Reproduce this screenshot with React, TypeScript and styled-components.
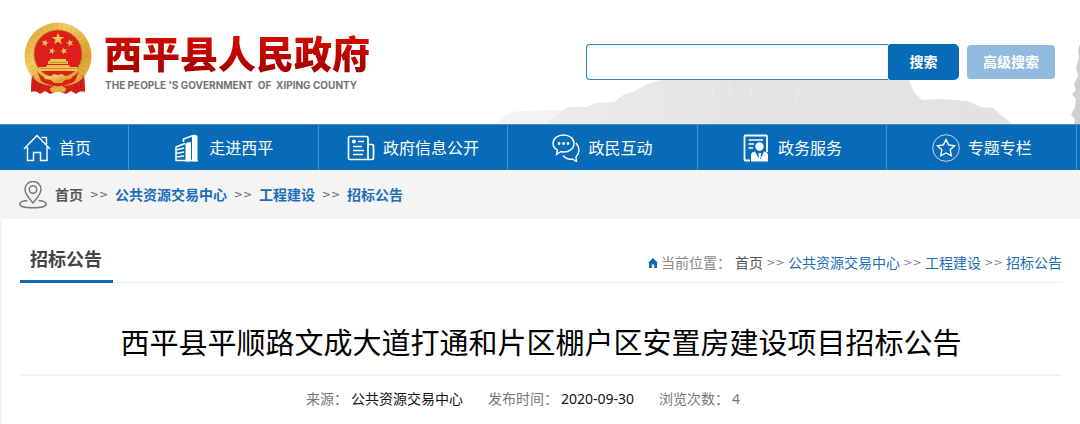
import React, { Fragment } from "react";
import styled, { createGlobalStyle } from "styled-components";

const blue = "#086bb8";
const lineGrey = "#ececec";

const GlobalStyle = createGlobalStyle`
  *, *::before, *::after { box-sizing: border-box; }
  body {
    margin: 0;
    background: #fff;
    color: #555;
    font: 14px/20px "Noto Sans", "Noto Sans CJK SC", sans-serif;
  }
  a { color: inherit; text-decoration: none; }
  h1, h2, p, ul, ol { margin: 0; padding: 0; }
  ul, ol { list-style: none; }
`;

const Header = styled.header`
  position: relative;
  display: flex;
  justify-content: space-between;
  align-items: flex-start;
  height: 124px;
  padding: 0 25px 0 24px;
  overflow: hidden;
`;

const Backdrop = styled.svg`
  position: absolute;
  right: 0;
  bottom: 0;
`;

const Brand = styled.a`
  display: flex;
  align-items: flex-start;
  gap: 12px;
  padding-top: 22px;
`;

const BrandText = styled.div`
  display: flex;
  flex-direction: column;
  padding-top: 4px;
`;

const BrandName = styled.span`
  font-family: "Noto Sans CJK SC", sans-serif;
  font-size: 38px;
  font-weight: 900;
  line-height: 52px;
  white-space: nowrap;
  color: transparent;
  background: linear-gradient(#d40b00 20%, #a30000 90%);
  background-clip: text;
  -webkit-background-clip: text;
`;

const BrandSub = styled.span`
  padding-left: 1px;
  font-family: Inter, sans-serif;
  font-size: 10px;
  font-weight: 700;
  line-height: 14px;
  color: #737373;
  white-space: pre;
`;

const SearchForm = styled.form`
  position: relative;
  display: flex;
  align-items: center;
  padding-top: 44px;
`;

const SearchInput = styled.input`
  width: 302px;
  height: 36px;
  padding: 0 10px;
  border: 1px solid #2a80c3;
  border-right: 0;
  border-radius: 4px 0 0 4px;
  background: #fff;
  font: inherit;
  outline: none;
`;

const SearchButton = styled.button<{ $soft?: boolean }>`
  width: ${(p) => (p.$soft ? 88 : 71)}px;
  height: ${(p) => (p.$soft ? 34 : 36)}px;
  margin-left: ${(p) => (p.$soft ? 8 : 0)}px;
  padding: 0;
  border: 0;
  border-radius: ${(p) => (p.$soft ? "4px" : "3px 5px 5px 3px")};
  background: ${(p) => (p.$soft ? "#90bbdf" : blue)};
  color: #fff;
  font: inherit;
  font-weight: 700;
`;

const Nav = styled.nav`
  background: ${blue};
  border-top: 1px solid #3f8dca;
  padding-right: 3px;
`;

const NavList = styled.ul`
  display: flex;
`;

const NavItem = styled.li<{ $home?: boolean }>`
  flex: ${(p) => (p.$home ? "0 0 129px" : "1 1 0")};
  border-right: 1px solid #4a94cd;
`;

const NavLink = styled.a<{ $home?: boolean }>`
  display: flex;
  align-items: center;
  justify-content: ${(p) => (p.$home ? "flex-start" : "center")};
  gap: 8px;
  height: 45px;
  padding-left: ${(p) => (p.$home ? 23 : 0)}px;
  color: #fff;
  font-size: 16px;
  white-space: nowrap;
`;

const Crumbs = styled.nav`
  display: flex;
  align-items: center;
  gap: 8px;
  height: 49px;
  padding-left: 19px;
  background: #f4f4f4;
  font-weight: 700;
`;

const Trail = styled.ol`
  display: flex;
  white-space: nowrap;
`;

const TrailLink = styled.a<{ $accent?: boolean }>`
  color: ${(p) => (p.$accent ? "#1a6fb8" : "#555")};
`;

const Separator = styled.li<{ $narrow?: boolean }>`
  width: ${(p) => (p.$narrow ? 25 : 32)}px;
  text-align: center;
  font-family: "DejaVu Sans", sans-serif;
  font-size: 11px;
  font-weight: 400;
  color: ${(p) => (p.$narrow ? "#888" : "#666")};
`;

const Main = styled.main`
  padding: 0 18px;
  border-left: 2px solid #f4f4f4;
`;

const SectionHead = styled.div`
  display: flex;
  justify-content: space-between;
  height: 64px;
  border-bottom: 1px solid ${lineGrey};
`;

const SectionTitle = styled.h2`
  height: 64px;
  padding: 27px 11px 0 10px;
  border-bottom: 3px solid ${blue};
  color: #444;
  font-size: 18px;
  line-height: 26px;
`;

const Position = styled.nav`
  display: flex;
  align-items: center;
  height: 20px;
  margin-top: 34px;
  color: #888;
`;

const PositionLabel = styled.span`
  padding: 0 4px 0 3px;
`;

const Title = styled.h1`
  padding: 38px 0 9px;
  border-bottom: 2px solid #f2f2f2;
  color: #000;
  font-size: 29px;
  font-weight: 400;
  line-height: 44px;
  text-align: center;
`;

const Meta = styled.p`
  display: flex;
  justify-content: center;
  gap: 25px;
  padding: 13px 36px 15px 0;
  color: #777;
`;

const MetaValue = styled.span<{ $muted?: boolean }>`
  margin-left: 3px;
  color: ${(p) => (p.$muted ? "#777" : "#111")};
`;

function Mountains() {
  return (
    <Backdrop width="600" height="84" viewBox="480 40 600 84" aria-hidden="true">
      <defs>
        <linearGradient id="ridge" x1="0" x2="1" y1="0" y2="0">
          <stop offset="0" stopColor="#ececec" />
          <stop offset="0.4" stopColor="#e4e4e4" />
          <stop offset="1" stopColor="#e2e2e2" />
        </linearGradient>
      </defs>
      <path d="M495 124L503 117L511 112L522 111L560 110L580 106V124Z" fill="#f3f3f3" />
      <path d="M547 124L557 115L568 107L586 107L595 103L614 102L623 95L635 91L645 85L660 80L700 74L890 74L909 80L914 92L922 100L941 99L968 101L981 107L993 108L1012 124Z" fill="url(#ridge)" />
      <path d="M700 82L703 92M712 84L713 98M728 82L730 97M750 88L753 100M640 94L628 107M800 84L796 101" stroke="#e9e9e9" strokeWidth="2" fill="none" />
      <path d="M1080 44L1078 50L1079 58L1076 67L1078 76L1074 84L1076 90L1072 94L1076 99L1075 107L1071 115L1075 119L1074 124H1080Z" fill="#cfcfcf" />
    </Backdrop>
  );
}

const star = "M0-10L2.4-3.1L9.5-3.1L3.8 1.2L5.9 8.1L0 4L-5.9 8.1L-3.8 1.2L-9.5-3.1L-2.4-3.1Z";

function Emblem() {
  return (
    <svg width="68" height="72" viewBox="0 0 68 72" aria-hidden="true">
      <defs>
        <linearGradient id="gold" x1="0" x2="1" y1="0" y2="1">
          <stop offset="0" stopColor="#d8992b" />
          <stop offset="0.35" stopColor="#f3cc62" />
          <stop offset="0.7" stopColor="#dba033" />
          <stop offset="1" stopColor="#efc04c" />
        </linearGradient>
      </defs>
      <path d="M8 53L7 70L12 69L16 72L21 69L26 72L34 69L42 72L47 69L52 72L56 69L61 70L60 53Z" fill="#d51f1b" />
      <circle cx="34" cy="34" r="33.5" fill="url(#gold)" />
      <circle cx="34" cy="34" r="29" fill="none" stroke="#c98722" strokeWidth="4" strokeDasharray="1 4" opacity="0.3" />
      <circle cx="34" cy="32" r="24" fill="#dc1e1c" stroke="#b97b1d" />
      <g fill="#f1c250">
        <path d={star} transform="translate(34 17) scale(.66)" />
        <path d={star} transform="translate(21 21) rotate(15) scale(.4)" />
        <path d={star} transform="translate(46 21) rotate(-15) scale(.4)" />
        <path d={star} transform="translate(28 29) rotate(20) scale(.37)" />
        <path d={star} transform="translate(40 29) rotate(-20) scale(.37)" />
        <path d="M26 37H42V39H44V42H24V39H26ZM23 43H45L46 45H53V49H15V45H22Z" />
      </g>
      <path d="M16 46.500H52M25 40.500H43" stroke="#c98f2b" strokeWidth="1" />
      <path d="M13 49Q18 56 25 56H43Q50 56 55 49L51 59Q43 64 34 64Q25 64 17 59Z" fill="#db211c" />
      <path d="M17 50Q23 54 27 54L30 52L34 53L38 52L41 54Q46 54 51 50L47 57L41 58L38 61H30L27 58L21 57Z" fill="url(#gold)" />
      <path d="M8 53Q12 60 21 61L26 64L34 62L42 64L47 61Q56 60 60 53L61 68L55 70L50 66L42 69L34 67L26 69L18 66L13 70L7 68Z" fill="#d71d1b" />
      <path d="M9 54Q14 60 22 61M59 54Q54 60 46 61M12 59L10 69M17 62L14 68M56 59L58 69M51 62L54 68" stroke="#a91814" fill="none" />
      <path d="M26 67L30 64L34 65L38 64L42 67L40 70L34 69L28 70ZM8 54Q13 61 24 63M60 54Q55 61 44 63" fill="#e2aa3b" stroke="#e2aa3b" strokeWidth="1" fillRule="evenodd" />
    </svg>
  );
}

type IconKind = "home" | "building" | "news" | "chat" | "service" | "star";

const iconArt: Record<IconKind, React.ReactNode> = {
  home: (
    <path d="M1 15L14 1.500L27 15M4.500 13V26.500H10.500V18.500H17.500V26.500H24V13M18.500 3.500H23.500V10" />
  ),
  building: (
    <>
      <path d="M10.500 8V5L21 1.200" strokeWidth="1.600" />
      <path d="M19 2L22 .5L24.500 2V27.500H19Z" fill="#fff" stroke="none" />
      <path d="M12.500 9.500L14 8.500L18 8V27.500H12.500Z" fill="#fff" stroke="none" />
      <path d="M3 13L12 9.500M3 16L11 14M3 19.500L11 18M3 23L11 22M3 26.500H25M3 12.500V27" strokeWidth="1.500" />
    </>
  ),
  news: (
    <>
      <path d="M3 2.500H19.500Q21 2.500 21 4V25.500H3Q1.500 25.500 1.500 24V4Q1.500 2.500 3 2.500ZM21 10.500H25Q26.500 10.500 26.500 12V24Q26.500 25.500 25 25.500H21" strokeWidth="1.700" />
      <path d="M11 7.500H17M6 12.500H15M6 16.500H17M6 20.500H16" />
      <circle cx="7" cy="7.500" r="1.300" fill="#fff" />
    </>
  ),
  chat: (
    <>
      <path d="M4.500 20.500L5.500 16Q1 13.500 1 9.500C1 4.500 5.500 1 11.500 1S22 4.500 22 9.500S17.500 18 11.500 18Q10 18 9 17.500L4.500 20.500Z" />
      <path d="M24 9Q30 16 24 23L24.500 27.500L20.500 25Q15 26 11 21.500" />
      <path d="M7 9.500H7.100M11.500 9.500H11.600M16 9.500H16.100" strokeWidth="2.800" strokeLinecap="round" />
    </>
  ),
  service: (
    <>
      <path d="M8 26.500H3.500Q2.500 26.500 2.500 25.500V2.500Q2.500 1.500 3.500 1.500H24Q25 1.500 25 2.500V18" strokeWidth="1.800" />
      <path d="M6.500 6H21M6.500 10H12M6.500 14H11" />
      <circle cx="17.500" cy="12.500" r="4.200" fill="#fff" stroke="none" />
      <path d="M9 27.500V21Q9 18 13 17.500L17 25L16.500 19H19L18.500 25L22 17.500Q26 18 26 21V27.500Z" fill="#fff" stroke="none" />
    </>
  ),
  star: (
    <>
      <circle cx="14" cy="14" r="13.300" strokeWidth="1" opacity="0.75" />
      <path d="M14 5.500L16.600 10.900L22.500 11.700L18.200 15.800L19.300 21.700L14 19L8.700 21.700L9.800 15.800L5.500 11.700L11.400 10.900Z" />
    </>
  ),
};

function NavIcon({ kind }: { kind: IconKind }) {
  return (
    <svg width="28" height="28" viewBox="0 0 28 28" fill="none" stroke="#fff" strokeWidth="1.400" aria-hidden="true">
      {iconArt[kind]}
    </svg>
  );
}

function PinIcon() {
  return (
    <svg width="28" height="28" viewBox="0 0 28 28" fill="none" stroke="#777" strokeWidth="1.500" aria-hidden="true">
      <path d="M14 22Q6 13 6 8.500A8 8 0 0 1 22 8.500Q22 13 14 22Z" />
      <circle cx="14" cy="8.500" r="3.700" />
      <path d="M8.500 19.500C3 20 .8 21.500 .8 23C.8 25.500 7 26.800 14 26.800S27.200 25.500 27.200 23C27.200 21.500 25 20 19.500 19.500" />
    </svg>
  );
}

function HomeMark() {
  return (
    <svg width="10" height="10" viewBox="0 0 10 10" fill={blue} aria-hidden="true">
      <path d="M5 0L10 5H9V10H6.200V6.500H3.800V10H1V5H0Z" />
    </svg>
  );
}

const navItems: { label: string; kind: IconKind }[] = [
  { label: "首页", kind: "home" },
  { label: "走进西平", kind: "building" },
  { label: "政府信息公开", kind: "news" },
  { label: "政民互动", kind: "chat" },
  { label: "政务服务", kind: "service" },
  { label: "专题专栏", kind: "star" },
];

const path = ["首页", "公共资源交易中心", "工程建设", "招标公告"];

function PathTrail({ narrow }: { narrow?: boolean }) {
  return (
    <Trail>
      {path.map((name, i) => (
        <Fragment key={name}>
          {i > 0 && <Separator $narrow={narrow}>&gt;&gt;</Separator>}
          <li>
            <TrailLink href="#" $accent={i > 0}>{name}</TrailLink>
          </li>
        </Fragment>
      ))}
    </Trail>
  );
}

export default function App() {
  return (
    <>
      <GlobalStyle />
      <Header>
        <Mountains />
        <Brand href="#">
          <Emblem />
          <BrandText>
            <BrandName>西平县人民政府</BrandName>
            <BrandSub>{"THE PEOPLE 'S GOVERNMENT  OF  XIPING COUNTY"}</BrandSub>
          </BrandText>
        </Brand>
        <SearchForm role="search" onSubmit={(e) => e.preventDefault()}>
          <SearchInput type="text" aria-label="搜索" />
          <SearchButton type="submit">搜索</SearchButton>
          <SearchButton type="button" $soft>高级搜索</SearchButton>
        </SearchForm>
      </Header>
      <Nav>
        <NavList>
          {navItems.map(({ label, kind }) => (
            <NavItem key={label} $home={kind === "home"}>
              <NavLink href="#" $home={kind === "home"}>
                <NavIcon kind={kind} />
                {label}
              </NavLink>
            </NavItem>
          ))}
        </NavList>
      </Nav>
      <Crumbs>
        <PinIcon />
        <PathTrail />
      </Crumbs>
      <Main>
        <SectionHead>
          <SectionTitle>招标公告</SectionTitle>
          <Position>
            <HomeMark />
            <PositionLabel>当前位置：</PositionLabel>
            <PathTrail narrow />
          </Position>
        </SectionHead>
        <Title>西平县平顺路文成大道打通和片区棚户区安置房建设项目招标公告</Title>
        <Meta>
          <span>来源：<MetaValue>公共资源交易中心</MetaValue></span>
          <span>发布时间：<MetaValue>2020-09-30</MetaValue></span>
          <span>浏览次数：<MetaValue $muted>4</MetaValue></span>
        </Meta>
      </Main>
    </>
  );
}
